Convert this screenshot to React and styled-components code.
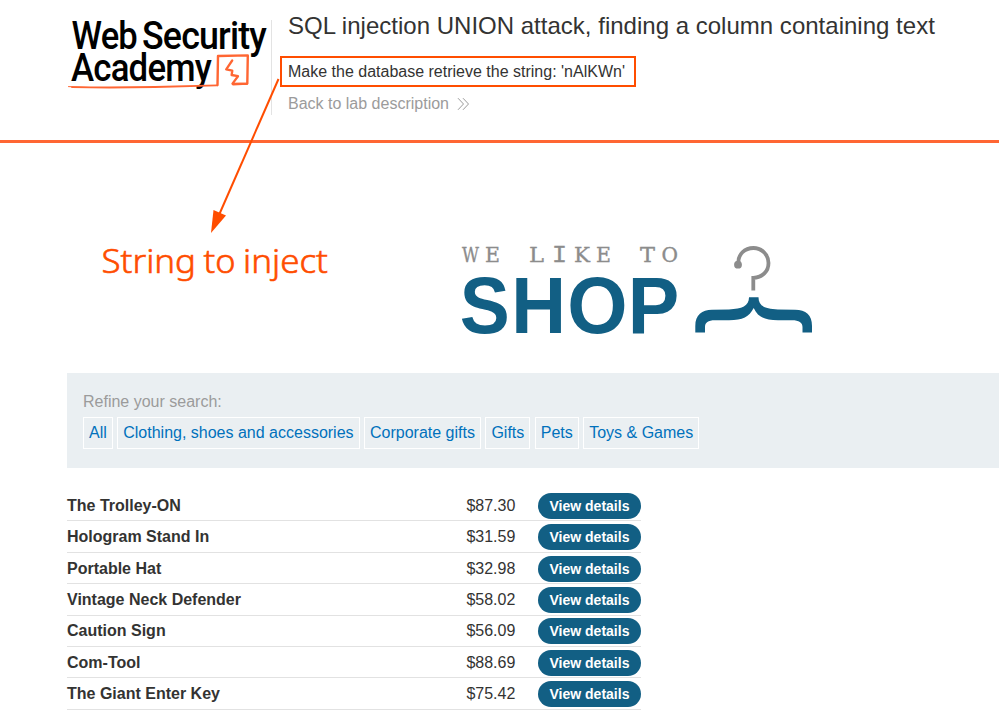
import React from "react";
import styled, { createGlobalStyle } from "styled-components";

const Global = createGlobalStyle`
  * { box-sizing: border-box; }
  html, body { margin: 0; height: 712px; overflow: hidden; background: #fff; }
  body { font: 16px/20px "Liberation Sans", Arial, sans-serif; color: #333332; }
`;
const Page = styled.div`position: relative; width: 999px; height: 712px; overflow: hidden;`;
const Header = styled.header`
  display: flex;
  height: 143px;
  padding-left: 67px;
  border-bottom: 3px solid #ff6633;
`;
const AcademyLogo = styled.svg`width: 204px; height: 100px; flex: none; overflow: visible;`;
const Divider = styled.div`width: 1px; height: 95px; margin-top: 20px; background: #e3e3e3;`;
const LabInfo = styled.div`flex: 1; padding: 11px 0 0 8px; white-space: nowrap;`;
const Title = styled.h1`
  margin: 0 0 15px 8px;
  font-size: 24px;
  font-weight: 400;
  line-height: 30px;
  letter-spacing: 0.012px;
`;
const Task = styled.p`
  width: 356px;
  height: 31px;
  margin: 0;
  padding: 4px 6px;
  border: 2px solid #ff4d00;
`;
const BackLink = styled.a`
  display: flex;
  align-items: center;
  gap: 8px;
  margin: 7px 0 0 8px;
  color: #9b9b9b;
`;
const Chevrons = styled.svg`width: 14px; height: 14px; margin-top: -1px;`;
const Banner = styled.section`
  display: flex;
  height: 230px;
  padding: 97px 0 0 459px;
`;
const ShopLogo = styled.svg`width: 360px; height: 100px; overflow: visible;`;
const Filters = styled.section`
  height: 95px;
  margin-left: 67px;
  padding: 19px 16px 0;
  background: #eaeff2;
`;
const FilterLabel = styled.div`height: 25px; color: #9b9b9b;`;
const FilterList = styled.nav`display: flex; gap: 4.45px;`;
const Filter = styled.a`
  height: 32px;
  padding: 5px;
  border: 1px solid #fff;
  color: #0071bc;
  white-space: nowrap;
`;
const Products = styled.main`width: 574px; margin: 21.98px 0 0 67px;`;
const Product = styled.div`
  display: grid;
  grid-template-columns: 399.4px 71.6px 103px;
  align-items: start;
  height: 31.4px;
  padding-top: 2.85px;
  border-bottom: 1px solid #e2e2e2;
`;
const Name = styled.span`padding-top: 3px; font-weight: 700;`;
const Price = styled.span`padding-top: 3px;`;
const Button = styled.a`
  height: 26px;
  border-radius: 13px;
  background: #125f84;
  color: #fff;
  font-size: 14px;
  font-weight: 700;
  line-height: 26px;
  text-align: center;
`;
const Arrow = styled.svg`position: absolute; left: 200px; top: 70px; width: 90px; height: 170px;`;
const Callout = styled.svg`position: absolute; left: 90px; top: 235px; width: 250px; height: 55px;`;

const filters = ["All", "Clothing, shoes and accessories", "Corporate gifts", "Gifts", "Pets", "Toys & Games"];
const products = [
  ["The Trolley-ON", "$87.30"],
  ["Hologram Stand In", "$31.59"],
  ["Portable Hat", "$32.98"],
  ["Vintage Neck Defender", "$58.02"],
  ["Caution Sign", "$56.09"],
  ["Com-Tool", "$88.69"],
  ["The Giant Enter Key", "$75.42"],
];
// letter, left edge, width
const slogan = [
  ["W", 462, 17], ["E", 485, 15], ["L", 529, 15], ["I", 552, 15],
  ["K", 574, 16], ["E", 596, 15], ["T", 640, 15], ["O", 661.5, 16.5],
];
const shop = [["S", 459.8, 50], ["H", 511.3, 54.8], ["O", 567.2, 60.3], ["P", 627.8, 51.5]];

export default function App() {
  return (
    <Page>
      <Global />
      <Header>
        <AcademyLogo viewBox="67 0 204 100">
          <g fill="#000" fontFamily="Roboto, sans-serif" fontWeight="500" fontSize="38.5" letterSpacing="-0.9">
            <text x="71.5" y="49" textLength="65.5" lengthAdjust="spacingAndGlyphs">Web</text>
            <text x="142" y="49" textLength="124" lengthAdjust="spacingAndGlyphs">Security</text>
            <text x="71" y="81" textLength="140" lengthAdjust="spacingAndGlyphs">Academy</text>
          </g>
          <g fill="none" stroke="#ff6633" strokeLinejoin="round" strokeLinecap="round">
            <path d="M72 87.1 Q110 87.9 155 87 L217 85.4" strokeWidth="1.9" />
            <path d="M68.5 86.6 L90 87.5" strokeWidth="1" />
            <path d="M217.5 85 L218 56 L247.8 55.4 L247.3 83.6 L233 84.3" strokeWidth="2.4" />
            <path d="M232.2 60.5 L226.2 69.3 L232.3 70.7 L231.6 75 L238 76.2 L232.5 83.6 L247 83.8" strokeWidth="2.3" />
          </g>
        </AcademyLogo>
        <Divider />
        <LabInfo>
          <Title>SQL injection UNION attack, finding a column containing text</Title>
          <Task>Make the database retrieve the string: 'nAlKWn'</Task>
          <BackLink>
            Back to lab description
            <Chevrons viewBox="0 0 14 14" fill="none" stroke="#9b9b9b">
              <path d="M1 1.2L6.5 7L1 12.8M6 1.2L11.5 7L6 12.8" />
            </Chevrons>
          </BackLink>
        </LabInfo>
      </Header>
      <Banner>
        <ShopLogo viewBox="459 240 360 100">
          <g fill="#8c8c8c" stroke="#8c8c8c" strokeWidth=".35">
            {slogan.map(([c, x, w]) => (
              <text
                key={x}
                x={x}
                y="262"
                fontFamily={c === "I" ? "'Liberation Mono', monospace" : "'DejaVu Serif', serif"}
                fontSize={c === "I" ? 23 : 21}
                textLength={w}
                lengthAdjust="spacingAndGlyphs"
              >{c}</text>
            ))}
          </g>
          <g fill="#125f84" fontFamily="'Liberation Sans', Arial, sans-serif" fontWeight="700" fontSize="80.6">
            {shop.map(([c, x, w]) => (
              <text key={c} x={x} y="332.5" textLength={w} lengthAdjust="spacingAndGlyphs">{c}</text>
            ))}
          </g>
          <path d="M738.5 264 C737.5 254 745 248 753.5 248 C762 248 768.5 255 768.5 263 C768.5 271.5 762.5 277.5 753.3 277.8 V290.5" fill="none" stroke="#8c8c8c" strokeWidth="3.8" />
          <circle cx="738" cy="264.7" r="3.9" fill="#8c8c8c" />
          <path d="M695.3 332.5 V326 C695.3 315 702 309.8 712 309.8 L729 309.4 C742 309 749 306 749 297.3 H758.5 C758.5 306 765 309 778 309.4 L795 309.8 C806 309.8 812 315 812 326 V332.5 H802.5 V327 C802.5 322.5 799 320.2 792 320.2 H778 C764 320.2 758 317 753.7 308 C749 317 743 320.2 729 320.2 H715 C708 320.2 705 322.5 705 327 V332.5 Z" fill="#125f84" />
        </ShopLogo>
      </Banner>
      <Filters>
        <FilterLabel>Refine your search:</FilterLabel>
        <FilterList>{filters.map((f) => <Filter key={f}>{f}</Filter>)}</FilterList>
      </Filters>
      <Products>
        {products.map(([name, price]) => (
          <Product key={name}>
            <Name>{name}</Name>
            <Price>{price}</Price>
            <Button>View details</Button>
          </Product>
        ))}
      </Products>
      <Arrow viewBox="200 70 90 170">
        <path d="M278.5 79L219 215" stroke="#ff4d00" strokeWidth="2" />
        <path d="M213.5 210L226 215.5L211 233Z" fill="#ff4d00" />
      </Arrow>
      <Callout viewBox="90 235 250 55">
        <g fill="#ff4d00" stroke="#ff4d00" strokeWidth=".6" fontFamily="'Noto Sans', sans-serif" fontWeight="300" fontSize="33">
          <text x="101.5" y="273" textLength="94.5" lengthAdjust="spacingAndGlyphs">String</text>
          <text x="203.5" y="273" textLength="32" lengthAdjust="spacingAndGlyphs">to</text>
          <text x="243" y="273" textLength="85" lengthAdjust="spacingAndGlyphs">inject</text>
        </g>
      </Callout>
    </Page>
  );
}
